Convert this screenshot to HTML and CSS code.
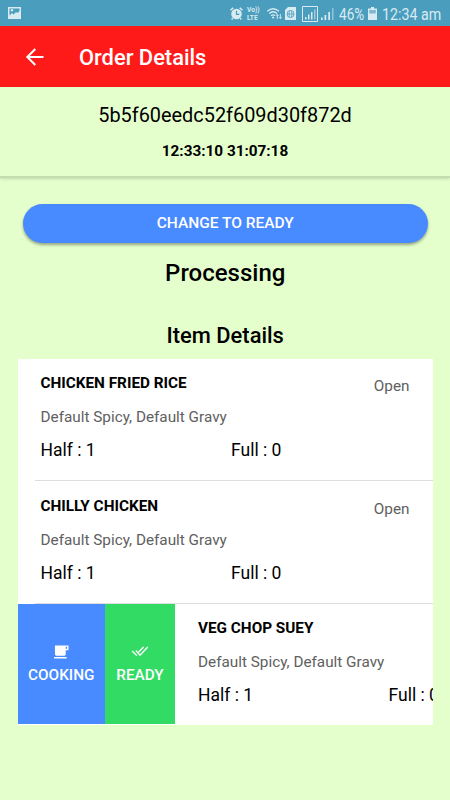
FILE: index.html
```html
<!DOCTYPE html>
<html lang="en">
<head>
<meta charset="utf-8">
<title>Order Details</title>
<link rel="stylesheet" href="styles.css">
</head>
<body>
<div class="status">
  <svg class="photo" viewBox="0 0 13 12"><path fill-rule="evenodd" d="M0 0h13v12H0zM1.500 1.500v7L4 6l1.500 1.500L8 5l1.500 1L11.500 4V1.500z"/><circle cx="4" cy="3.300" r="1.200"/></svg>
  <div class="tray">
    <svg class="alarm" viewBox="0 0 14 14"><circle cx="7" cy="7.500" r="5.700"/><path d="M.5 3.500l3-2.500M10.500 1l3 2.500M3 12l-1.200 1.500M11 12l1.200 1.500" stroke="#d9ebf2" stroke-width="1.600"/><path d="M7 4v4h3" fill="none" stroke="#4a9dbd" stroke-width="1.300"/></svg>
    <div class="volte"><span>Vo))</span><span>LTE</span></div>
    <svg class="wifi" viewBox="0 0 17 14"><g fill="none" stroke="#d9ebf2" stroke-width="1.400"><path d="M.7 4.500Q7 -.8 13.300 4.500M2.800 7Q7 3.300 11.200 7M4.800 9.300Q7 7.500 9 9.300"/><path d="M11.500 13V8M10 9.500L11.500 8 13 9.500M14.800 7.500v5M13.300 11l1.500 1.500 1.500-1.500" stroke-width="1"/></g><circle cx="7" cy="11.300" r="1.200"/></svg>
    <svg class="sim" viewBox="0 0 11 13"><path d="M3 0h8v13H0V3z"/><g fill="none" stroke="#4a9dbd" stroke-width=".8"><circle cx="5.500" cy="7" r="3.500"/><ellipse cx="5.500" cy="7" rx="1.500" ry="3.500"/><path d="M2 7h7"/></g></svg>
    <svg class="sig1" viewBox="0 0 16 16"><path d="M.5.5h15v15H.5z" fill="none" stroke="#d9ebf2"/><path d="M3 11h1.500v2.500H3zM6 8.500h1.500v5H6zM9 6h1.500v7.500H9z"/><path opacity=".6" d="M12 3.500h1.500v10H12z"/></svg>
    <svg class="sig2" viewBox="0 0 13 12"><path d="M0 9.500h1.700V12H0zM3.500 7h1.700v5H3.500zM7.300 4H9v8H7.300z"/><path opacity=".5" d="M11 0h1.500v12H11z"/></svg>
    <span class="pct">46%</span>
    <svg class="batt" viewBox="0 0 9 13"><path d="M3 0h3v1.500h3V13H0V1.500h3z"/><path d="M1.200 3h6.600v3.500H1.200z" fill="#4a9dbd" opacity=".65"/></svg>
    <span class="clock">12:34 am</span>
  </div>
</div>
<header class="bar">
  <svg class="back" viewBox="0 0 18 18"><path d="M17.500 9H1.500M9.300 1L1.300 9l8 8" fill="none" stroke="#fff" stroke-width="2"/></svg>
  <h1>Order Details</h1>
</header>
<section class="order">
  <div class="oid">5b5f60eedc52f609d30f872d</div>
  <div class="time">12:33:10 31:07:18</div>
</section>
<main>
  <button class="change">CHANGE TO READY</button>
  <h2 class="state">Processing</h2>
  <h3 class="heading">Item Details</h3>
  <div class="list">
    <div class="item">
      <div class="body">
        <h4>CHICKEN FRIED RICE</h4>
        <p>Default Spicy, Default Gravy</p>
        <div class="qty"><span>Half : 1</span><span>Full : 0</span></div>
        <span class="note">Open</span>
      </div>
    </div>
    <div class="item second">
      <div class="body">
        <h4>CHILLY CHICKEN</h4>
        <p>Default Spicy, Default Gravy</p>
        <div class="qty"><span>Half : 1</span><span>Full : 0</span></div>
        <span class="note">Open</span>
      </div>
    </div>
    <div class="item open">
      <div class="act cooking">
        <svg class="cup" viewBox="0 0 16 14"><path fill-rule="evenodd" d="M1 0h14.500v5H12.500v4.500q0 1.500-1.500 1.500H2.500Q1 11 1 9.500zM12.500 1.500v2h1.500v-2zM0 12.300h13.500V14H0z"/></svg>
        <span>COOKING</span>
      </div>
      <div class="act ready">
        <svg class="checks" viewBox="0 0 18 12"><path d="M.5 5.500l5 5M4.500 5l4.500 5L17.500 1M7.500 6.500L13 1" fill="none" stroke="#fff" stroke-width="1.500"/></svg>
        <span>READY</span>
      </div>
      <div class="body">
        <h4>VEG CHOP SUEY</h4>
        <p>Default Spicy, Default Gravy</p>
        <div class="qty"><span>Half : 1</span><span>Full : 0</span></div>
      </div>
    </div>
  </div>
</main>
</body>
</html>
```
FILE: styles.css
```css
* { box-sizing: border-box; }
body { margin: 0; width: 450px; height: 800px; overflow: hidden; background: #e5ffcc; color: #000; font-family: Roboto, sans-serif; }
h1, h2, h3, h4, p { margin: 0; font-weight: 500; }
svg { display: block; flex: none; overflow: visible; }
.status { height: 26px; background: #4a9dbd; display: flex; justify-content: space-between; padding: 0 8px 0 8px; color: #d9ebf2; }
.status svg { fill: #d9ebf2; }
.photo { width: 13px; height: 12px; margin-top: 7px; }
.tray { display: flex; align-items: center; height: 27px; }
.alarm { width: 13px; height: 13px; margin-right: 4px; }
.volte { display: flex; flex-direction: column; width: 14px; font-size: 6.600px; line-height: 8px; font-weight: 700; margin-right: 5px; white-space: nowrap; }
.wifi { width: 17px; height: 13px; margin-right: 2px; }
.sim { width: 11px; height: 13px; margin-right: 6px; }
.sig1 { width: 16px; height: 16px; margin-right: 3px; }
.sig2 { width: 13px; height: 12px; margin-right: 5px; }
.pct, .clock { font-size: 16px; line-height: 27px; padding-top: 1px; white-space: nowrap; }
.pct { width: 26px; margin-right: 3px; transform: scaleX(.85); transform-origin: left; }
.batt { width: 9px; height: 13px; margin-right: 5px; }
.clock { width: 60px; transform: scaleX(.89); transform-origin: left; }
.bar { height: 61px; background: #ff1a1a; display: flex; align-items: center; padding-left: 26px; color: #fff; }
.back { width: 18px; height: 18px; margin-right: 35px; }
.bar h1 { font-size: 21.900px; line-height: 28px; padding-top: 2px; }
.order { height: 91px; text-align: center; padding-top: 16px; border-bottom: 2px solid #c5dcb0; box-shadow: 0 1px 3px rgba(0,0,0,.15); }
.oid { font-size: 19.900px; line-height: 26px; }
.time { font-size: 15.300px; line-height: 20px; font-weight: 700; margin-top: 12px; }
main { padding: 26px 17px 0 17.500px; text-align: center; }
.change { display: block; width: 404.500px; height: 39px; margin: 0 0 0 5.500px; padding: 0; border: 0; border-radius: 20px; background: #488aff; color: #fff; font: 500 15.500px/39px Roboto, sans-serif; box-shadow: 0 2px 3px rgba(0,0,0,.35); }
.state { font-size: 24px; line-height: 30px; margin-top: 15px; }
.heading { font-size: 21.900px; line-height: 30px; margin-top: 33px; }
.list { margin-top: 8px; background: #fff; height: 366px; overflow: hidden; text-align: left; }
.item { height: 122.500px; display: flex; overflow: hidden; }
.item:first-child { height: 122px; }
.body { position: relative; flex: none; width: 399px; margin-left: 17px; padding: 14px 0 0 6px; border-bottom: 1px solid #dedede; }
.second .body { padding-top: 15px; }
.second .note { top: 18px; }
.item h4 { font-size: 15.300px; line-height: 20px; font-weight: 700; }
.item p { font-size: 15.300px; line-height: 20px; font-weight: 400; color: #606060; margin-top: 14px; }
.qty { display: flex; font-size: 17.500px; line-height: 24px; margin-top: 11px; }
.qty span { width: 190.500px; flex: none; }
.note { position: absolute; right: 24px; top: 17px; font-size: 15.300px; line-height: 20px; color: #606060; }
.act { flex: none; display: flex; flex-direction: column; align-items: center; height: 120.500px; color: #fff; font-size: 15.300px; font-weight: 500; line-height: 20px; }
.act svg { fill: #fff; }
.cooking { width: 87.500px; background: #488aff; padding-top: 41px; }
.ready { width: 70px; background: #32db64; padding-top: 42px; }
.cup { width: 15px; height: 14px; margin-bottom: 6px; }
.checks { width: 18px; height: 11px; margin-bottom: 8px; }
.open .body { border: 0; }
```
